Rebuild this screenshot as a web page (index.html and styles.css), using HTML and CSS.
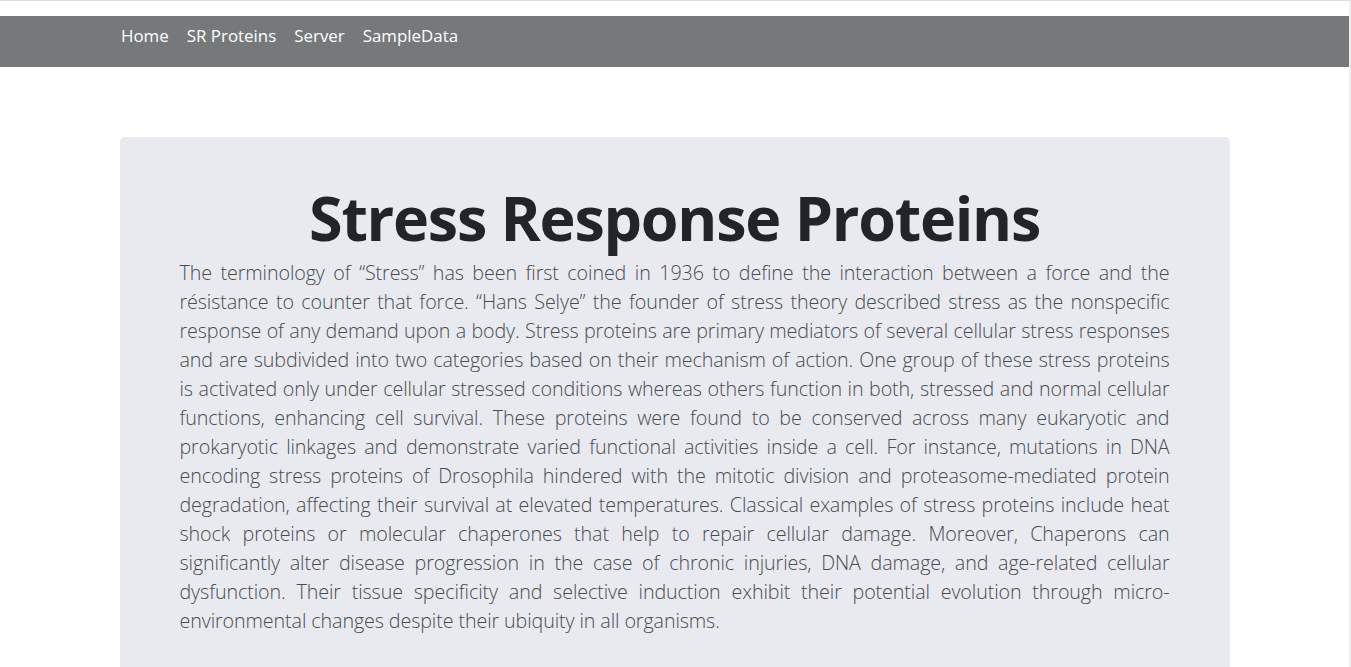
FILE: index.html
```html
<!DOCTYPE html>
<html lang="en">
<head>
<meta charset="utf-8">
<title>Stress Response Proteins</title>
<link rel="stylesheet" href="styles.css">
</head>
<body>
<div class="topline"></div>
<nav class="navbar">
  <div class="nav-inner">
    <a class="nav-link" href="#">Home</a>
    <a class="nav-link" href="#">SR Proteins</a>
    <a class="nav-link" href="#">Server</a>
    <a class="nav-link" href="#">SampleData</a>
  </div>
</nav>
<main class="container">
  <section class="jumbotron">
    <h1 class="title">Stress Response Proteins</h1>
    <p class="lead">
      <span class="ln">The terminology of “Stress” has been first coined in 1936 to define the interaction between a force and the</span>
      <span class="ln">résistance to counter that force. “Hans Selye” the founder of stress theory described stress as the nonspecific</span>
      <span class="ln">response of any demand upon a body. Stress proteins are primary mediators of several cellular stress responses</span>
      <span class="ln">and are subdivided into two categories based on their mechanism of action. One group of these stress proteins</span>
      <span class="ln">is activated only under cellular stressed conditions whereas others function in both, stressed and normal cellular</span>
      <span class="ln">functions, enhancing cell survival. These proteins were found to be conserved across many eukaryotic and</span>
      <span class="ln">prokaryotic linkages and demonstrate varied functional activities inside a cell. For instance, mutations in DNA</span>
      <span class="ln">encoding stress proteins of Drosophila hindered with the mitotic division and proteasome-mediated protein</span>
      <span class="ln">degradation, affecting their survival at elevated temperatures. Classical examples of stress proteins include heat</span>
      <span class="ln">shock proteins or molecular chaperones that help to repair cellular damage. Moreover, Chaperons can</span>
      <span class="ln">significantly alter disease progression in the case of chronic injuries, DNA damage, and age-related cellular</span>
      <span class="ln">dysfunction. Their tissue specificity and selective induction exhibit their potential evolution through micro-</span>
      <span class="ln last">environmental changes despite their ubiquity in all organisms.</span>
    </p>
  </section>
</main>
</body>
</html>
```
FILE: styles.css
```css
html {
  background: #ffffff;
}
body {
  margin: 0;
  width: 1349px;
  min-height: 667px;
  border-right: 2px solid #f0f0f0;
  font-family: "Open Sans", "Noto Sans", sans-serif;
  color: #212529;
  overflow: hidden;
}
.topline {
  height: 1px;
  background: #dcdce3;
}
.navbar {
  margin-top: 15px;
  height: 51px;
  background: #75797b;
  display: flex;
  align-items: flex-start;
}
.nav-inner {
  width: 1110px;
  margin: 0 auto;
  padding: 7px 0 0 3px;
  display: flex;
  gap: 18px;
}
.nav-link {
  color: #ffffff;
  text-decoration: none;
  font-size: 16.9px;
  line-height: 26px;
}
.container {
  width: 1110px;
  margin: 70px auto 0;
}
.jumbotron {
  background: #e9eaef;
  border-radius: 5px;
  padding: 42px 60px 40px;
  min-height: 560px;
}
.title {
  margin: 0;
  text-align: center;
  font-size: 61px;
  font-weight: 700;
  line-height: 78px;
  letter-spacing: -1.25px;
  color: #212529;
}
.lead {
  margin: 1px 0 0;
  font-size: 19.7px;
  font-weight: 300;
  line-height: 29px;
  color: #474c52;
  letter-spacing: -0.1px;
}
.ln {
  display: block;
  text-align: justify;
  text-align-last: justify;
  white-space: nowrap;
}
.ln.last {
  text-align-last: left;
}
```
